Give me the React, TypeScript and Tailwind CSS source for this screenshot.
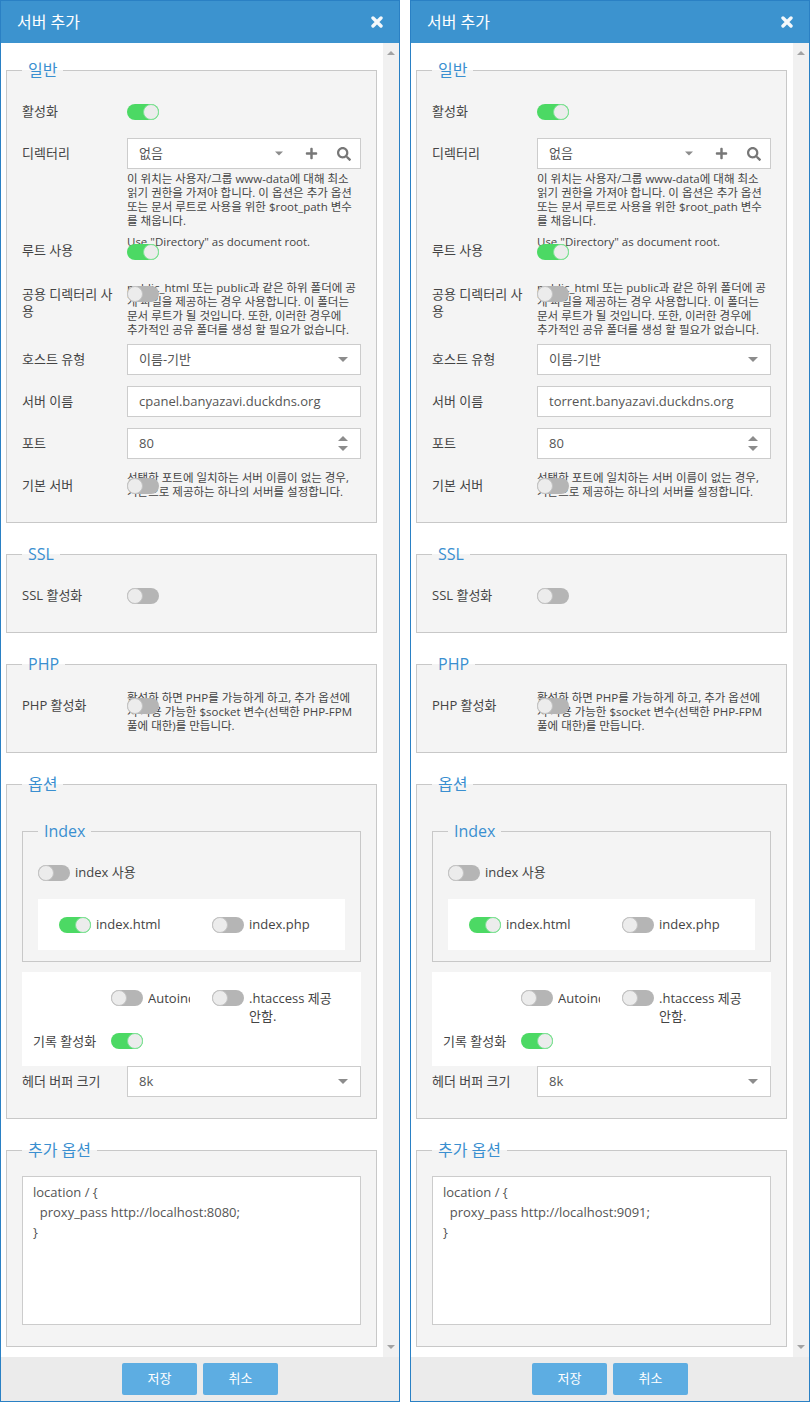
import { FaPlus, FaSearch } from "react-icons/fa";

function Toggle({ on }: { on?: boolean }) {
  return (
    <div
      className={`flex h-[16px] w-[32px] shrink-0 items-center rounded-full ${
        on ? "justify-end bg-[#4cd964]" : "justify-start bg-[#b5b5b5]"
      }`}
    >
      <div
        className={`h-[16px] w-[16px] rounded-full border bg-[#ececec] ${
          on ? "border-[#7fe196]" : "border-[#c4c4c4]"
        }`}
      />
    </div>
  );
}

function Caret({ w = 10 }: { w?: number }) {
  return (
    <svg width={w} height="5" viewBox="0 0 10 5" className="shrink-0">
      <path d="M0 0h10L5 5z" fill="#8c8c8c" />
    </svg>
  );
}

function Help({ lines }: { lines: string[] }) {
  return (
    <div className="text-[11.5px] leading-[14px] text-[#444]">
      {lines.map((l, i) => (
        <div key={i} className="whitespace-nowrap">
          {l}
        </div>
      ))}
    </div>
  );
}

function HelpRow({
  label,
  lines,
  on,
  className,
  toggleTop,
  labelPt,
}: {
  label: string;
  lines: string[];
  on?: boolean;
  className: string;
  toggleTop: string;
  labelPt: string;
}) {
  return (
    <div className={`flex ${className}`}>
      <div className={`w-[105px] shrink-0 text-[13px] leading-[17px] ${labelPt}`}>
        <div className="w-[96px] break-all">{label}</div>
      </div>
      <div className="relative flex-1">
        <Help lines={lines} />
        <div className={`absolute left-0 ${toggleTop}`}>
          <Toggle on={on} />
        </div>
      </div>
    </div>
  );
}

function Box({ children }: { children: React.ReactNode }) {
  return (
    <div className="flex h-[31px] flex-1 items-center border border-[#cccccc] bg-white pl-[11px] pr-[12px] text-[13px] text-[#555]">
      {children}
    </div>
  );
}

function BoxRow({ label, className, children }: { label: string; className: string; children: React.ReactNode }) {
  return (
    <div className={`flex items-center ${className}`}>
      <div className="w-[105px] shrink-0 text-[13px] leading-[17px]">{label}</div>
      <Box>{children}</Box>
    </div>
  );
}

function Fieldset({ title, className, children }: { title: string; className: string; children: React.ReactNode }) {
  return (
    <fieldset className={`border border-[#c8c8c8] bg-[#f4f4f4] px-[15px] ${className}`}>
      <legend className="px-[6px] text-[16px] leading-[24px] text-[#3a8fd0]">{title}</legend>
      {children}
    </fieldset>
  );
}

function Dialog({ server, port }: { server: string; port: string }) {
  return (
    <div className="flex h-[1402px] w-[400px] shrink-0 flex-col border border-[#2a80c4] bg-white text-[#444]">
      {/* header */}
      <div className="flex h-[42px] shrink-0 items-center justify-between bg-[#3c93cf] pl-[16px] pr-[16px]">
        <span className="text-[16px] text-white">서버 추가</span>
        <svg width="12" height="12" viewBox="0 0 12 12">
          <path d="M2 2L10 10M10 2L2 10" stroke="#f4f8fb" strokeWidth="3.4" strokeLinecap="round" />
        </svg>
      </div>

      {/* body */}
      <div className="flex h-[1314px] shrink-0 overflow-hidden">
        <div className="flex-1 pl-[5px] pr-[6px] pt-[15px]">
          <Fieldset title="일반" className="pb-[23px]">
            <div className="mt-[14px] flex h-[32px] items-center">
              <div className="w-[105px] shrink-0 text-[13px]">활성화</div>
              <Toggle on />
            </div>
            <div className="mt-[10px] flex">
              <div className="flex h-[31px] w-[105px] shrink-0 items-center text-[13px]">디렉터리</div>
              <div className="flex-1">
                <div className="flex h-[31px] items-center border border-[#cccccc] bg-white pl-[11px] pr-[9px] text-[13px] text-[#555]">
                  <span className="flex-1">없음</span>
                  <Caret w={8} />
                  <FaPlus className="ml-[22px] text-[#777]" size={13} />
                  <FaSearch className="ml-[19px] text-[#777]" size={14} />
                </div>
                <div className="mt-[3px]">
                  <Help
                    lines={[
                      "이 위치는 사용자/그룹 www-data에 대해 최소",
                      "읽기 권한을 가져야 합니다. 이 옵션은 추가 옵션",
                      "또는 문서 루트로 사용을 위한 $root_path 변수",
                      "를 채웁니다.",
                    ]}
                  />
                </div>
              </div>
            </div>
            <HelpRow
              label="루트 사용"
              lines={['Use "Directory" as document root.']}
              on
              className="mt-[7px]"
              toggleTop="top-[9px]"
              labelPt="pt-[7px]"
            />
            <HelpRow
              label="공용 디렉터리 사용"
              lines={[
                "public_html 또는 public과 같은 하위 폴더에 공",
                "개 파일을 제공하는 경우 사용합니다. 이 폴더는",
                "문서 루트가 될 것입니다. 또한, 이러한 경우에",
                "추가적인 공유 폴더를 생성 할 필요가 없습니다.",
              ]}
              className="mt-[22px]"
              toggleTop="top-[5px]"
              labelPt="pt-[5px]"
            />
            <BoxRow label="호스트 유형" className="mt-[7px]">
              <span className="flex-1">이름-기반</span>
              <Caret />
            </BoxRow>
            <BoxRow label="서버 이름" className="mt-[11px]">
              <span className="flex-1">{server}</span>
            </BoxRow>
            <BoxRow label="포트" className="mt-[11px]">
              <span className="flex-1">80</span>
              <svg width="10" height="16" viewBox="0 0 10 16" className="shrink-0">
                <path d="M0 5L5 0L10 5z" fill="#8c8c8c" />
                <path d="M0 10h10L5 15z" fill="#8c8c8c" />
              </svg>
            </BoxRow>
            <HelpRow
              label="기본 서버"
              lines={["선택한 포트에 일치하는 서버 이름이 없는 경우,", "기본으로 제공하는 하나의 서버를 설정합니다."]}
              className="mt-[12px]"
              toggleTop="top-[7px]"
              labelPt="pt-[6px]"
            />
          </Fieldset>

          <Fieldset title="SSL" className="mt-[19px] pb-[20px]">
            <div className="mt-[14px] flex h-[32px] items-center">
              <div className="w-[105px] shrink-0 text-[13px]">SSL 활성화</div>
              <Toggle />
            </div>
          </Fieldset>

          <Fieldset title="PHP" className="mt-[19px] pb-[19px]">
            <HelpRow
              label="PHP 활성화"
              lines={[
                "활성화 하면 PHP를 가능하게 하고, 추가 옵션에",
                "서 사용 가능한 $socket 변수(선택한 PHP-FPM",
                "풀에 대한)를 만듭니다.",
              ]}
              className="mt-[15px]"
              toggleTop="top-[7px]"
              labelPt="pt-[6px]"
            />
          </Fieldset>

          <Fieldset title="옵션" className="mt-[19px] pb-[21px]">
            <Fieldset title="Index" className="mt-[23px] pb-[11px]">
              <div className="mt-[14px] flex h-[32px] items-center gap-[5px] text-[13px]">
                <Toggle />
                <span>index 사용</span>
              </div>
              <div className="mt-[10px] flex h-[51px] items-center bg-white pl-[21px] text-[13px]">
                <div className="flex w-[153px] items-center gap-[5px]">
                  <Toggle on />
                  <span>index.html</span>
                </div>
                <div className="flex items-center gap-[5px]">
                  <Toggle />
                  <span>index.php</span>
                </div>
              </div>
            </Fieldset>

            <div className="mt-[10px] bg-white pb-[16px] pl-[11px] pt-[18px] text-[13px] leading-[18px]">
              <div className="flex items-start">
                <div className="w-[78px] shrink-0" />
                <div className="flex w-[101px] shrink-0 items-start gap-[5px]">
                  <Toggle />
                  <span className="-mt-[1px] w-[42px] overflow-hidden whitespace-nowrap">Autoindex</span>
                </div>
                <div className="flex items-start gap-[5px]">
                  <Toggle />
                  <span className="-mt-[1px] w-[96px]">.htaccess 제공 안함.</span>
                </div>
              </div>
              <div className="mt-[7px] flex items-center">
                <div className="w-[78px] shrink-0">기록 활성화</div>
                <Toggle on />
              </div>
            </div>

            <BoxRow label="헤더 버퍼 크기" className="">
              <span className="flex-1">8k</span>
              <Caret />
            </BoxRow>
          </Fieldset>

          <Fieldset title="추가 옵션" className="mt-[19px] pb-[21px]">
            <div className="mt-[14px] h-[149px] whitespace-pre border border-[#cccccc] bg-white pl-[10px] pt-[5px] text-[13px] leading-[20px] text-[#555]">
              {`location / {\n  proxy_pass http://localhost:${port};\n}`}
            </div>
          </Fieldset>
        </div>

        {/* scrollbar */}
        <div className="flex w-[16px] shrink-0 flex-col items-center justify-between bg-[#f1f1f1] py-[8px]">
          <svg width="8" height="4" viewBox="0 0 8 4">
            <path d="M0 4L4 0L8 4z" fill="#a3a3a3" />
          </svg>
          <svg width="8" height="4" viewBox="0 0 8 4">
            <path d="M0 0h8L4 4z" fill="#a3a3a3" />
          </svg>
        </div>
      </div>

      {/* footer */}
      <div className="flex flex-1 justify-center gap-[6px] bg-[#ebebeb] pt-[6px]">
        <button className="h-[32px] w-[75px] rounded-[2px] bg-[#5dade2] text-[13px] text-white">저장</button>
        <button className="h-[32px] w-[75px] rounded-[2px] bg-[#5dade2] text-[13px] text-white">취소</button>
      </div>
    </div>
  );
}

export default function App() {
  return (
    <div className="flex h-[1402px] w-[810px] gap-[10px] bg-white font-['Open_Sans','Noto_Sans_CJK_KR',sans-serif]">
      <Dialog server="cpanel.banyazavi.duckdns.org" port="8080" />
      <Dialog server="torrent.banyazavi.duckdns.org" port="9091" />
    </div>
  );
}
